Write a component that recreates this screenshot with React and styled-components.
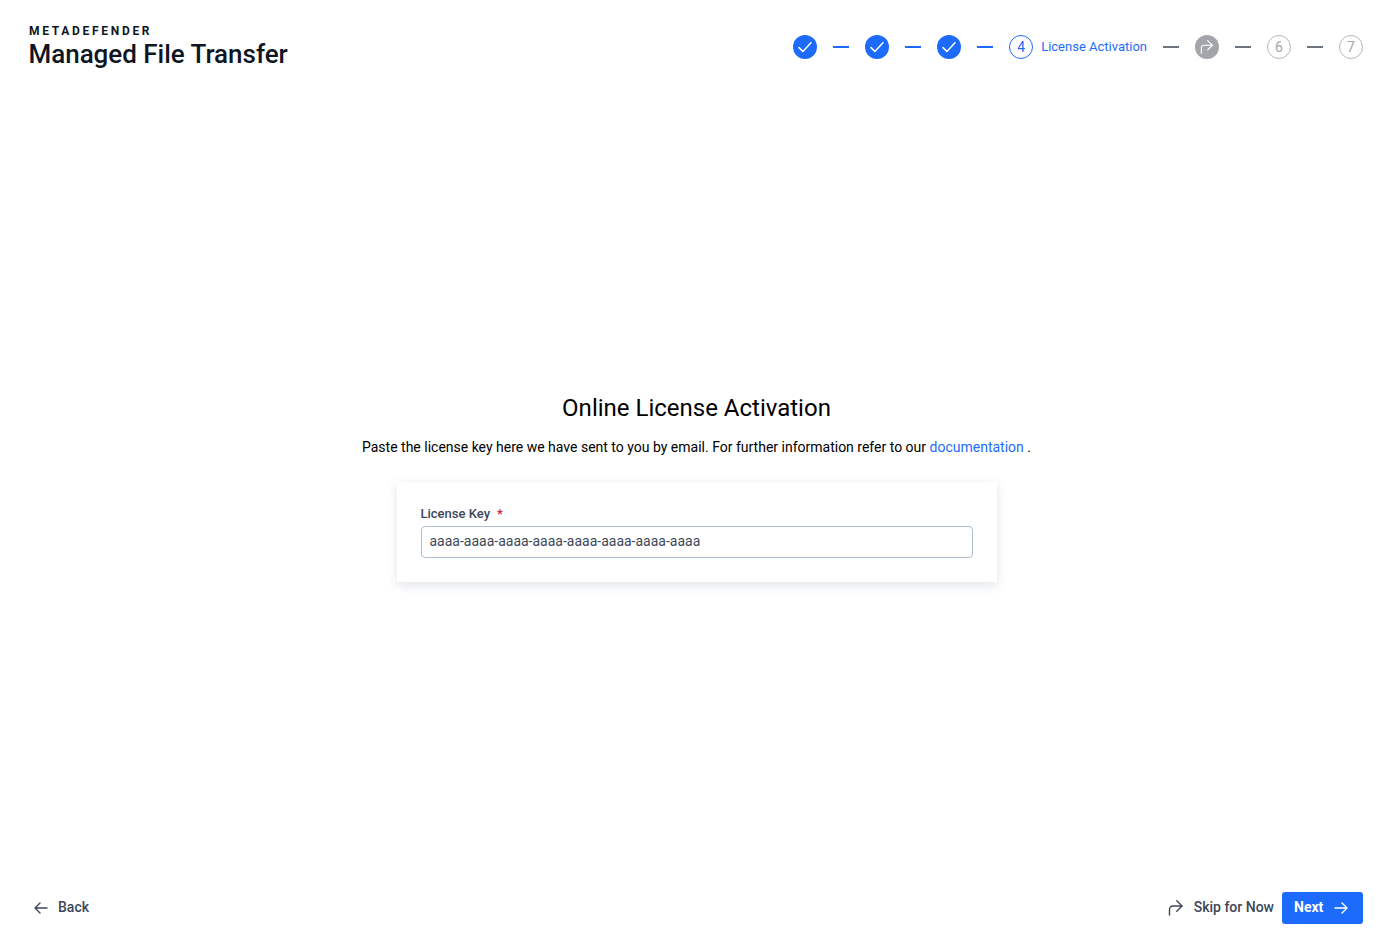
import styled, { createGlobalStyle } from 'styled-components';

const GlobalStyle = createGlobalStyle`
  html, body {
    margin: 0;
    padding: 0;
    background: #fff;
    font-family: Roboto, "Liberation Sans", sans-serif;
  }
`;

const Page = styled.div`
  box-sizing: border-box;
  width: 100%;
  height: 950px;
  display: flex;
  flex-direction: column;
  overflow: hidden;
`;

const Header = styled.header`
  display: flex;
  justify-content: space-between;
  align-items: flex-start;
  padding: 24px 29px 0 29px;
  height: 70px;
  box-sizing: border-box;
`;

const Logo = styled.div`
  display: flex;
  flex-direction: column;
  color: #0f1623;
`;

const LogoBrand = styled.div`
  font-size: 12px;
  line-height: 14px;
  font-weight: 700;
  letter-spacing: 2.7px;
`;

const LogoProduct = styled.div`
  margin: 1px 0 0 -0.5px;
  font-size: 26px;
  line-height: 30px;
  font-weight: 500;
  letter-spacing: -0.03px;
`;

const Stepper = styled.div`
  display: flex;
  align-items: center;
  gap: 16px;
  height: 24px;
  margin-top: 11px;
`;

const Dash = styled.span`
  width: 16px;
  height: 2px;
  background: ${(p) => (p.$active ? '#1d6bfc' : '#6d7280')};
`;

const StepGroup = styled.div`
  display: flex;
  align-items: center;
  gap: 8px;
`;

const StepFilled = styled.span`
  width: 24px;
  height: 24px;
  border-radius: 50%;
  background: ${(p) => (p.$skipped ? '#a3a5ab' : '#1d6bfc')};
  display: flex;
  align-items: center;
  justify-content: center;
`;

const StepNumber = styled.span`
  box-sizing: border-box;
  width: 24px;
  height: 24px;
  border-radius: 50%;
  border: 1px solid ${(p) => (p.$active ? '#1d6bfc' : '#b4b6bb')};
  color: ${(p) => (p.$active ? '#1d6bfc' : '#a3a5ab')};
  font-size: 14px;
  display: flex;
  align-items: center;
  justify-content: center;
`;

const StepLabel = styled.span`
  margin-top: -2px;
  color: #1d6bfc;
  font-size: 13px;
`;

const Main = styled.main`
  flex: 1;
  display: flex;
  flex-direction: column;
  align-items: center;
  padding: 322px 0 0 1px;
  box-sizing: border-box;
`;

const Title = styled.h1`
  margin: 0;
  font-size: 24px;
  line-height: 32px;
  font-weight: 400;
  color: #000;
`;

const Description = styled.p`
  margin: 13px 0 0;
  font-size: 14px;
  line-height: 20px;
  color: #000;
`;

const DocLink = styled.a`
  color: #1d6bfc;
  text-decoration: none;
`;

const Card = styled.div`
  box-sizing: border-box;
  width: 600px;
  height: 100px;
  margin-top: 25px;
  padding: 24px 24px 0;
  background: #fff;
  box-shadow: 0 3px 10px rgba(30, 50, 90, 0.14);
`;

const FieldLabel = styled.label`
  display: block;
  font-size: 13px;
  line-height: 16px;
  font-weight: 500;
  color: #3d4759;
`;

const Required = styled.span`
  color: #d0202a;
  margin-left: 7px;
`;

const KeyInput = styled.input`
  box-sizing: border-box;
  display: block;
  width: 100%;
  height: 32px;
  margin-top: 4px;
  padding: 0 8px 2px;
  border: 1px solid #b0bdd6;
  border-radius: 4px;
  outline: none;
  font-family: inherit;
  font-size: 14px;
  color: #3d4759;
`;

const Footer = styled.footer`
  display: flex;
  justify-content: space-between;
  align-items: center;
  height: 32px;
  padding: 0 29px 26px 34px;
`;

const TextButton = styled.button`
  display: flex;
  align-items: center;
  gap: ${(p) => p.$gap}px;
  padding: 0;
  border: 0;
  background: none;
  font-family: inherit;
  font-size: 14px;
  font-weight: 500;
  color: #3d4759;
`;

const ButtonText = styled.span`
  margin-top: -2px;
`;

const FooterRight = styled.div`
  display: flex;
  align-items: center;
  gap: 8px;
`;

const NextButton = styled.button`
  box-sizing: border-box;
  width: 81px;
  height: 32px;
  display: flex;
  align-items: center;
  gap: 11px;
  padding: 0 0 0 12px;
  border: 0;
  border-radius: 3px;
  background: #1d6bfc;
  color: #fff;
  font-family: inherit;
  font-size: 14px;
  font-weight: 700;
`;

const Check = () => (
  <svg width="14" height="14" viewBox="0 0 14 14" fill="none" stroke="#fff" strokeWidth="1.5" strokeLinecap="round" strokeLinejoin="round">
    <path d="M1 7.6 4.9 11.4 13 2.8" />
  </svg>
);

const SkipArrow = ({ size, color, width }) => (
  <svg width={size} height={size} viewBox="0 0 16 16" fill="none" stroke={color} strokeWidth={width} strokeLinecap="round" strokeLinejoin="round">
    <path d="M1.5 15V9.5A3.5 3.5 0 0 1 5 6h9" />
    <path d="M8.8.8 14 6l-5.2 5.2" />
  </svg>
);

const ArrowRight = () => (
  <svg width="14" height="14" viewBox="0 0 14 14" fill="none" stroke="#fff" strokeWidth="1.4" strokeLinecap="round" strokeLinejoin="round">
    <path d="M1 7h12M8 2l5 5-5 5" />
  </svg>
);

const ArrowLeft = () => (
  <svg width="14" height="14" viewBox="0 0 14 14" fill="none" stroke="#3d4759" strokeWidth="1.4" strokeLinecap="round" strokeLinejoin="round">
    <path d="M13 7H1M6 2 1 7l5 5" />
  </svg>
);

const App = () => (
  <Page>
    <GlobalStyle />
    <Header>
      <Logo>
        <LogoBrand>METADEFENDER</LogoBrand>
        <LogoProduct>Managed File Transfer</LogoProduct>
      </Logo>
      <Stepper>
        <StepFilled><Check /></StepFilled>
        <Dash $active />
        <StepFilled><Check /></StepFilled>
        <Dash $active />
        <StepFilled><Check /></StepFilled>
        <Dash $active />
        <StepGroup>
          <StepNumber $active>4</StepNumber>
          <StepLabel>License Activation</StepLabel>
        </StepGroup>
        <Dash />
        <StepFilled $skipped><SkipArrow size={14} color="#fff" width={1.3} /></StepFilled>
        <Dash />
        <StepNumber>6</StepNumber>
        <Dash />
        <StepNumber>7</StepNumber>
      </Stepper>
    </Header>
    <Main>
      <Title>Online License Activation</Title>
      <Description>
        Paste the license key here we have sent to you by email. For further information refer to our{' '}
        <DocLink href="#docs">documentation</DocLink>
        {' '}.
      </Description>
      <Card>
        <FieldLabel>
          License Key
          <Required>*</Required>
        </FieldLabel>
        <KeyInput readOnly value="aaaa-aaaa-aaaa-aaaa-aaaa-aaaa-aaaa-aaaa" />
      </Card>
    </Main>
    <Footer>
      <TextButton $gap={10}>
        <ArrowLeft />
        <ButtonText>Back</ButtonText>
      </TextButton>
      <FooterRight>
        <TextButton $gap={10}>
          <SkipArrow size={16} color="#3d4759" width={1.4} />
          <ButtonText>Skip for Now</ButtonText>
        </TextButton>
        <NextButton>
          <ButtonText>Next</ButtonText>
          <ArrowRight />
        </NextButton>
      </FooterRight>
    </Footer>
  </Page>
);

export default App;
